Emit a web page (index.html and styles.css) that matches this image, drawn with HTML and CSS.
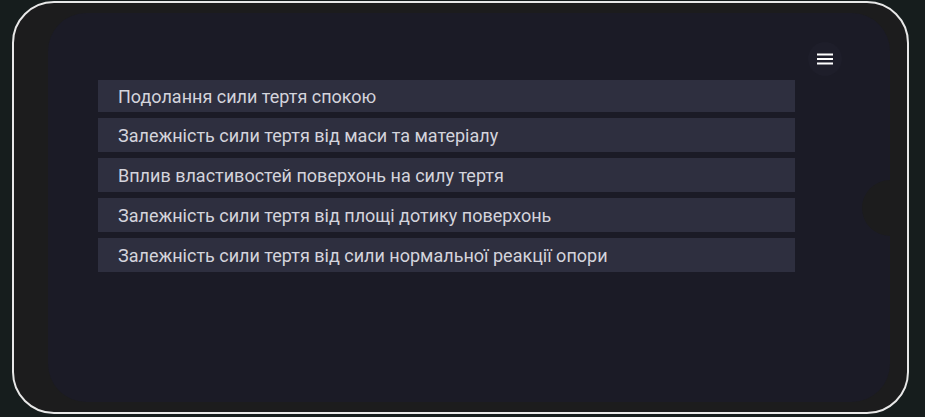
FILE: index.html
```html
<!DOCTYPE html>
<html lang="uk">
<head>
<meta charset="utf-8">
<title>Сила тертя</title>
<link rel="stylesheet" href="styles.css">
</head>
<body>
<div class="device">
  <div class="screen">
    <button class="menu-btn" aria-label="Меню">
      <svg width="16" height="12" viewBox="0 0 16 12"><rect x="0" y="0.5" width="16" height="2" fill="#fff"/><rect x="0" y="5" width="16" height="2" fill="#fff"/><rect x="0" y="9.5" width="16" height="2" fill="#fff"/></svg>
    </button>
    <ul class="topics">
      <li class="topic topic-first">Подолання сили тертя спокою</li>
      <li class="topic">Залежність сили тертя від маси та матеріалу</li>
      <li class="topic">Вплив властивостей поверхонь на силу тертя</li>
      <li class="topic">Залежність сили тертя від площі дотику поверхонь</li>
      <li class="topic">Залежність сили тертя від сили нормальної реакції опори</li>
    </ul>
    <div class="notch"></div>
  </div>
</div>
</body>
</html>
```

FILE: styles.css
```css
html, body {
  margin: 0;
  padding: 0;
  background: #161d1d;
  width: 925px;
  height: 417px;
  overflow: hidden;
}
body {
  font-family: Roboto, "Liberation Sans", sans-serif;
  padding: 1px 0 0 12px;
  box-sizing: border-box;
}
.device {
  width: 897px;
  height: 413px;
  box-sizing: border-box;
  border: 2px solid #e8e8e8;
  border-radius: 42px;
  background: #1c1c1d;
  padding: 10px 17px 10px 34px;
}
.screen {
  position: relative;
  height: 100%;
  background: #1b1b26;
  border-radius: 38px;
  padding: 67px 95px 0 50px;
  box-sizing: border-box;
}
.menu-btn {
  position: absolute;
  top: 29px;
  right: 48px;
  width: 34px;
  height: 34px;
  border-radius: 50%;
  border: none;
  background: #1e1e2a;
  display: flex;
  align-items: center;
  justify-content: center;
  padding: 0;
}
.topics {
  list-style: none;
  margin: 0;
  padding: 0;
  display: flex;
  flex-direction: column;
  gap: 6px;
}
.topic {
  height: 34px;
  background: #2e2f3f;
  color: #d4d4dc;
  font-size: 18px;
  font-weight: 400;
  display: flex;
  align-items: center;
  padding-left: 20px;
}
.topic-first {
  height: 32px;
}
.notch {
  position: absolute;
  right: 0;
  top: 167px;
  width: 28px;
  height: 56px;
  background: #1c1c1d;
  border-radius: 28px 0 0 28px;
}
```
